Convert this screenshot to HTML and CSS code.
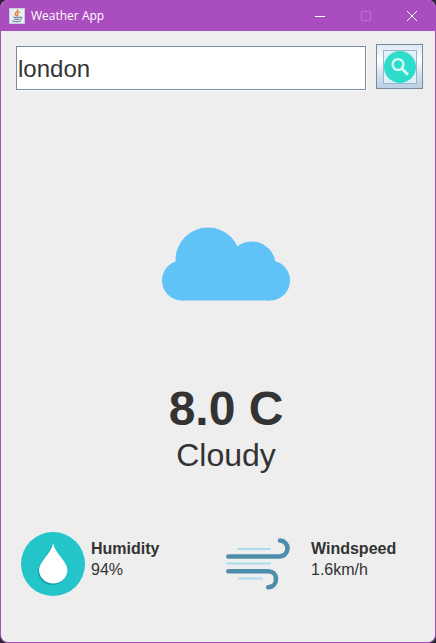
FILE: index.html
```html
<!DOCTYPE html>
<html lang="en">
<head>
<meta charset="utf-8">
<meta name="viewport" content="width=device-width, initial-scale=1">
<title>Weather App</title>
<link rel="stylesheet" href="styles.css">
</head>
<body>
<div class="window">
  <header class="titlebar">
    <svg class="app-icon" viewBox="0 0 16 16" aria-hidden="true">
      <rect x=".5" y=".5" width="15" height="15" fill="#e9eff3" stroke="#c5ced8"/>
      <g fill="none" stroke-linecap="round">
        <path d="M8.8 1.8C9.4 3.6 5.4 4.3 6.2 6.1L7.4 8M10.7 4C8.4 4.8 7.7 5.5 8.8 6.8L8.3 8" stroke="#e07b2c" stroke-width="1.3"/>
        <path d="M4.8 9.2C6 9.9 9 9.9 10.5 9.2M5.4 11.1C6.8 11.7 8.800 11.7 10 11.1M11.4 9.1C13.6 8.6 13.2 10.8 11.3 11.3M3.4 12.6C2.5 14 10.6 14.2 12 12.8" stroke="#47708e"/>
      </g>
    </svg>
    <h1 class="title">Weather App</h1>
    <button class="caption-button" type="button" aria-label="Minimize">
      <svg viewBox="0 0 10 10"><path d="M0 5.5H10"/></svg>
    </button>
    <button class="caption-button" type="button" aria-label="Maximize" disabled>
      <svg viewBox="0 0 10 10"><rect x=".5" y=".5" width="9" height="9" rx=".5"/></svg>
    </button>
    <button class="caption-button" type="button" aria-label="Close">
      <svg viewBox="0 0 10 10"><path d="M0 0L10 10M10 0L0 10"/></svg>
    </button>
  </header>
  <main class="content">
    <form class="search">
      <input class="search-field" type="text" value="london" aria-label="Location">
      <button class="search-button" type="button" aria-label="Search">
        <svg viewBox="0 0 34 34">
          <rect x=".5" y=".5" width="33" height="33" fill="#e3eff8" stroke="#9db5ca"/>
          <circle cx="17" cy="17" r="16" fill="#2edccb"/>
          <g fill="none" stroke="#d3fbf5" stroke-width="2.4">
            <circle cx="15" cy="14.5" r="5.4"/>
            <path d="M18.8 18.5L25 24.8" stroke-width="3"/>
          </g>
        </svg>
      </button>
    </form>
    <section class="conditions">
      <svg class="cloud" viewBox="0 0 128 74" role="img" aria-label="Cloudy weather">
        <g fill="#61c2f7">
          <circle cx="20" cy="53.5" r="20"/>
          <circle cx="46" cy="33" r="32.5"/>
          <circle cx="89.700" cy="38.5" r="24"/>
          <circle cx="108" cy="53.5" r="20"/>
          <rect x="20" y="36" width="88" height="37.5"/>
        </g>
      </svg>
      <p class="temperature">8.0 C</p>
      <p class="summary">Cloudy</p>
    </section>
    <section class="metrics">
      <div class="metric">
        <svg class="metric-icon" viewBox="0 0 64 64" aria-hidden="true">
          <circle cx="32" cy="32" r="32" fill="#23c4ca"/>
          <path d="M31 12C29 23 17 30 17 40A14.300 14.300 0 0 0 45.500 40C45.500 30 33 23 31 12Z" fill="#189fa9"/>
          <path d="M32 11C30.500 22 18 29 18 38.500A14.300 14.300 0 0 0 46.500 38.500C46.500 29 34 22 32 11Z" fill="#fff"/>
        </svg>
        <dl class="reading"><dt>Humidity</dt><dd>94%</dd></dl>
      </div>
      <div class="metric metric-wind">
        <svg class="metric-icon" viewBox="0 0 64 64" aria-hidden="true">
          <g fill="none" stroke="#4d8eac" stroke-width="4.6" stroke-linecap="round">
            <path d="M2.300 24.500H53C58.500 24.500 61.500 20.500 61.500 16.500C61.500 12 58 8.500 54 8.500"/>
            <path d="M2.300 39.300H42C47 39.300 50 42.500 50 47C50 51.500 47 55.200 42.200 55.200"/>
          </g>
          <path d="M12 17H44M1 31.500H44M13 46.500H36" fill="none" stroke="#a9dcec" stroke-width="2" stroke-linecap="round"/>
        </svg>
        <dl class="reading"><dt>Windspeed</dt><dd>1.6km/h</dd></dl>
      </div>
    </section>
  </main>
</div>
</body>
</html>
```
FILE: styles.css
```css
* {
  box-sizing: border-box;
}

body {
  margin: 0;
  background: #2c2635;
  color: #333;
  font-family: "Liberation Sans", Arial, sans-serif;
}

h1, p, dl, dd {
  margin: 0;
}

svg {
  display: block;
}

.window {
  display: flex;
  flex-direction: column;
  min-height: 100vh;
  border: 1px solid #a94dbf;
  border-top: 0;
  border-radius: 8px;
  background: #eee;
  overflow: hidden;
}

.titlebar {
  display: flex;
  align-items: center;
  height: 31px;
  padding-left: 8px;
  background: #a94dbf;
  color: #fff;
}

.app-icon {
  width: 16px;
  height: 16px;
}

.title {
  flex: 1;
  margin-left: 6px;
  font: 400 12px/16px "Open Sans", "Noto Sans", sans-serif;
}

.caption-button {
  display: flex;
  align-items: center;
  justify-content: center;
  width: 46px;
  height: 31px;
  padding: 0;
  border: 0;
  background: transparent;
}

.caption-button svg {
  width: 10px;
  height: 10px;
  overflow: visible;
  fill: none;
  stroke: #fff;
}

.caption-button:disabled svg {
  stroke: #c66bdc;
}

.content {
  flex: 1;
  display: flex;
  flex-direction: column;
  padding: 13px 12px 46px 15px;
}

.search {
  display: flex;
  align-items: flex-start;
  gap: 10px;
}

.search-field {
  flex: 1;
  min-width: 0;
  height: 44px;
  margin-top: 2px;
  padding: 2px 1px 0;
  border: 1px solid #7a8a99;
  border-radius: 0;
  outline: 0;
  background: #fff;
  box-shadow: 1px 1px 0 #fff;
  color: #333;
  font: 24px "Liberation Sans", Arial, sans-serif;
}

.search-button {
  display: flex;
  align-items: center;
  justify-content: center;
  width: 47px;
  height: 45px;
  padding: 0;
  border: 1px solid #7a8a99;
  background: linear-gradient(#dce8f3, #fff 35%, #dce8f3 60%, #b8cfe5);
}

.search-button svg {
  width: 34px;
  height: 34px;
}

.conditions {
  flex: 1;
  display: flex;
  flex-direction: column;
  align-items: center;
  justify-content: center;
  padding-top: 78px;
  padding-left: 13px;
}

.cloud {
  width: 128px;
  height: 74px;
}

.temperature {
  margin-top: 80px;
  font-size: 48px;
  font-weight: 700;
  line-height: 56px;
}

.summary {
  font-size: 32px;
  line-height: 36px;
}

.metrics {
  display: grid;
  grid-template-columns: 1fr 1fr;
  gap: 8px;
  padding-left: 5px;
}

.metric {
  display: flex;
  align-items: center;
  gap: 6px;
}

.metric-wind {
  gap: 21px;
}

.metric-icon {
  width: 64px;
  height: 64px;
}

.reading {
  padding-bottom: 10px;
  font-size: 16px;
  line-height: 21px;
}

.reading dt {
  font-weight: 700;
}
```
